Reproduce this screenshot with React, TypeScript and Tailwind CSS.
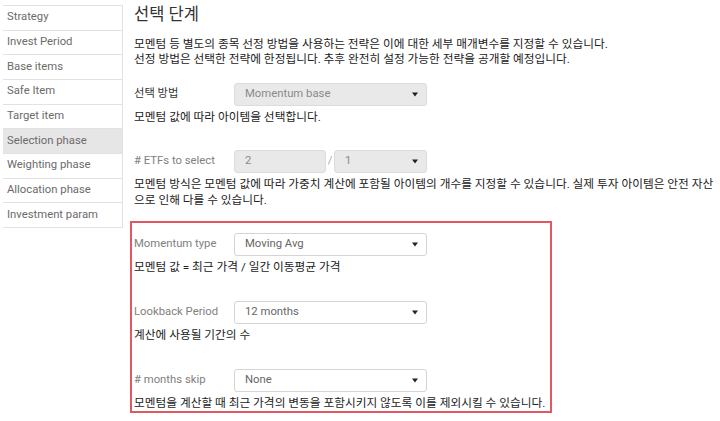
const menu = [
  "Strategy",
  "Invest Period",
  "Base items",
  "Safe Item",
  "Target item",
  "Selection phase",
  "Weighting phase",
  "Allocation phase",
  "Investment param",
];

function Caret() {
  return (
    <svg width="6" height="5" viewBox="0 0 6 5" className="shrink-0">
      <path d="M0 0.5h6L3 4.5z" fill="#222" />
    </svg>
  );
}

function Select({ value, disabled = false, width = "w-[193px]" }: { value: string; disabled?: boolean; width?: string }) {
  return (
    <div
      className={`flex h-[23px] items-center justify-between rounded-[3px] border pl-[10px] pr-[8px] ${width} ${
        disabled ? "border-[#dcdcdc] bg-[#e9e9e9] text-[#8a8a8a]" : "border-[#d4d4d4] bg-white text-[#666]"
      }`}
    >
      <span>{value}</span>
      <Caret />
    </div>
  );
}

function Field({
  label,
  dark = false,
  children,
  desc,
  className = "",
}: {
  label: string;
  dark?: boolean;
  children: React.ReactNode;
  desc: React.ReactNode;
  className?: string;
}) {
  return (
    <div className={className}>
      <div className="flex h-[23px] items-center">
        <div className={`w-[100px] shrink-0 ${dark ? "text-[#333]" : "text-[#808080]"}`}>{label}</div>
        {children}
      </div>
      <p className="mt-[3px] text-[11.7px] leading-[16px] text-[#222]">{desc}</p>
    </div>
  );
}

export default function App() {
  return (
    <div className="flex h-[421px] w-[720px] overflow-hidden bg-white font-['Roboto','Noto_Sans_CJK_KR',sans-serif] text-[11.3px] text-[#333]">
      <aside className="ml-[3px] mt-[5px] w-[120px] shrink-0 self-start border-r border-t border-[#e2e2e2]">
        {menu.map((item) => (
          <div
            key={item}
            className={`flex h-[24.67px] items-center border-b border-[#e2e2e2] pl-[4px] text-[#6b6b6b] ${
              item === "Selection phase" ? "bg-[#e6e6e6]" : ""
            }`}
          >
            {item}
          </div>
        ))}
      </aside>

      <main className="ml-[11px] min-w-0 flex-1">
        <h2 className="h-[29px] text-[16.5px] leading-[29px] text-[#333]">선택 단계</h2>
        <p className="mt-[8px] text-[11.7px] leading-[15px] text-[#222]">
          모멘텀 등 별도의 종목 선정 방법을 사용하는 전략은 이에 대한 세부 매개변수를 지정할 수 있습니다.
          <br />
          선정 방법은 선택한 전략에 한정됩니다. 추후 완전히 설정 가능한 전략을 공개할 예정입니다.
        </p>

        <Field className="mt-[16px]" label="선택 방법" dark desc="모멘텀 값에 따라 아이템을 선택합니다.">
          <Select value="Momentum base" disabled />
        </Field>

        <Field
          className="mt-[25px]"
          label="# ETFs to select"
          desc="모멘텀 방식은 모멘텀 값에 따라 가중치 계산에 포함될 아이템의 개수를 지정할 수 있습니다. 실제 투자 아이템은 안전 자산으로 인해 다를 수 있습니다."
        >
          <div className="flex h-[23px] w-[92px] items-center rounded-[3px] border border-[#dcdcdc] bg-[#e9e9e9] pl-[10px] text-[#8a8a8a]">
            2
          </div>
          <span className="w-[8px] text-center text-[#aaa]">/</span>
          <Select value="1" disabled width="w-[93px]" />
        </Field>

        <section className="ml-[-4px] mt-[13px] w-[422px] border-2 border-[#e25862] pl-[2px] pt-[10px]">
          <Field label="Momentum type" desc="모멘텀 값 = 최근 가격 / 일간 이동평균 가격">
            <Select value="Moving Avg" />
          </Field>
          <Field className="mt-[26px]" label="Lookback Period" desc="계산에 사용될 기간의 수">
            <Select value="12 months" />
          </Field>
          <Field
            className="mt-[26px]"
            label="# months skip"
            desc="모멘텀을 계산할 때 최근 가격의 변동을 포함시키지 않도록 이를 제외시킬 수 있습니다."
          >
            <Select value="None" />
          </Field>
        </section>
      </main>
    </div>
  );
}
